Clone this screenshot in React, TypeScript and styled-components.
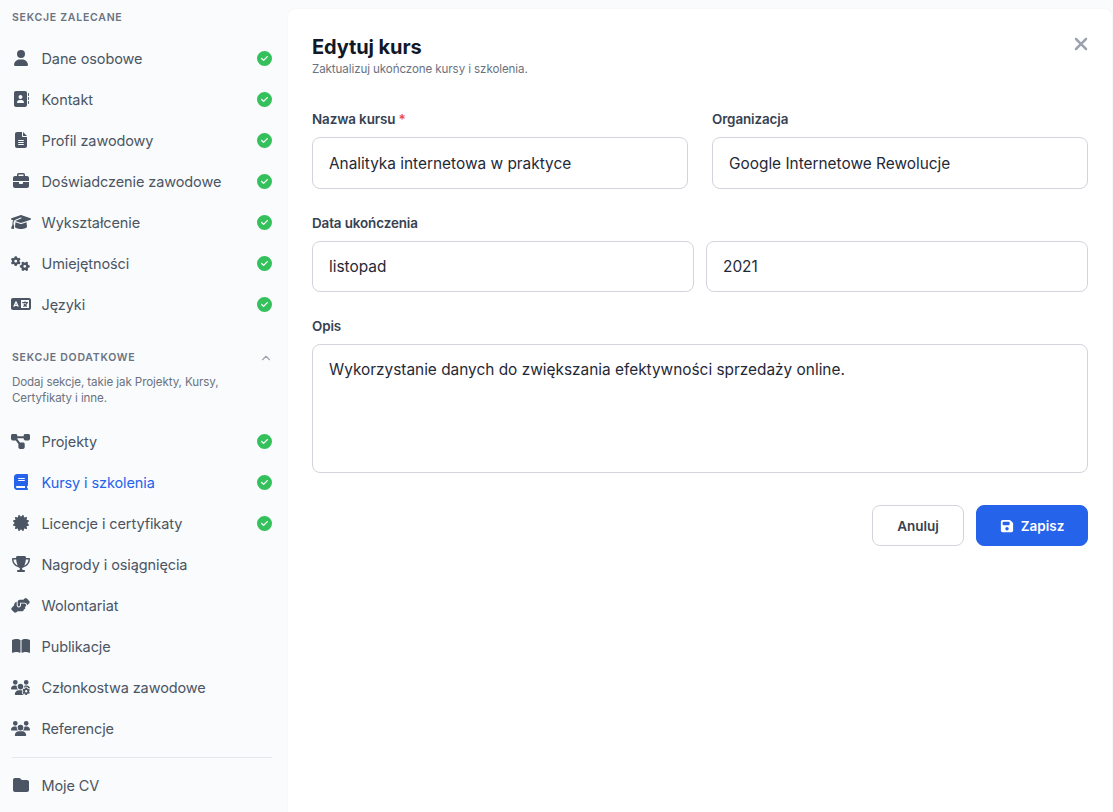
import React from 'react';
import styled, { createGlobalStyle } from 'styled-components';
import { IconType } from 'react-icons';
import {
  FaUser, FaAddressBook, FaFileLines, FaBriefcase, FaGraduationCap, FaGears, FaLanguage,
  FaDiagramProject, FaBook, FaCertificate, FaTrophy, FaHandshakeAngle, FaBookOpen,
  FaUsersGear, FaUsers, FaFolder, FaFloppyDisk, FaCircleCheck, FaXmark,
} from 'react-icons/fa6';
import { FiChevronUp } from 'react-icons/fi';

const Global = createGlobalStyle`
  html, body { margin: 0; padding: 0; background: #f9fbfd; }
  body { font-family: Inter, "Noto Sans", sans-serif; }
  * { box-sizing: border-box; }
`;

const Page = styled.div`
  display: flex;
  width: 1113px;
  height: 812px;
  overflow: hidden;
  background: #f9fbfd;
`;

const Sidebar = styled.aside`
  width: 288px;
  flex: none;
  padding: 10px 16px 0 12px;
  display: flex;
  flex-direction: column;
`;

const SectionHead = styled.div<{ $top?: number }>`
  display: flex;
  align-items: center;
  justify-content: space-between;
  height: 15px;
  margin-top: ${p => p.$top ?? 0}px;
  font-size: 10.5px;
  font-weight: 600;
  letter-spacing: 0.75px;
  color: #6b7280;
  text-transform: uppercase;
  svg { color: #9ca3af; margin-right: -1px; }
`;

const List = styled.div<{ $top: number }>`
  display: flex;
  flex-direction: column;
  gap: 13px;
  margin-top: ${p => p.$top}px;
`;

const Row = styled.div<{ $active?: boolean }>`
  display: flex;
  align-items: center;
  height: 28px;
  color: ${p => (p.$active ? '#2563eb' : '#4b5563')};
  font-size: 14.5px;
  letter-spacing: -0.1px;
`;

const IconSlot = styled.span<{ $size: number }>`
  width: 29.5px;
  flex: none;
  display: flex;
  justify-content: center;
  padding-right: 12.5px;
  font-size: ${p => p.$size}px;
  svg { display: block; flex: none; }
`;

const RowLabel = styled.span`
  flex: 1;
`;

const Check = styled(FaCircleCheck)`
  color: #34c15b;
  font-size: 15px;
`;

const Hint = styled.p`
  margin: 9px 0 0;
  max-width: 240px;
  font-size: 11.6px;
  line-height: 16px;
  color: #6b7280;
  letter-spacing: -0.1px;
`;

const Divider = styled.hr`
  border: 0;
  border-top: 1px solid #e5e7eb;
  margin: 15px 0 13px;
  width: 100%;
`;

const Panel = styled.main`
  flex: 1;
  margin: 9px 1px 0 0;
  background: #fff;
  border-radius: 8px 8px 0 0;
  box-shadow: 0 0 2px rgba(17, 24, 39, 0.06);
  padding: 24px 24px 0 24px;
  position: relative;
`;

const Title = styled.h1`
  margin: 0;
  font-size: 20px;
  line-height: 28px;
  font-weight: 700;
  color: #111827;
  letter-spacing: -0.1px;
`;

const Subtitle = styled.p`
  margin: 1px 0 0;
  font-size: 11.6px;
  line-height: 14px;
  color: #6b7280;
  letter-spacing: -0.1px;
`;

const Close = styled.button`
  position: absolute;
  top: 25px;
  right: 21px;
  padding: 0;
  border: 0;
  background: none;
  color: #9ca3af;
  font-size: 20px;
  display: flex;
`;

const Grid = styled.div<{ $cols: string; $gap: number; $top: number }>`
  display: grid;
  grid-template-columns: ${p => p.$cols};
  column-gap: ${p => p.$gap}px;
  margin-top: ${p => p.$top}px;
`;

const Label = styled.label<{ $top?: number }>`
  display: block;
  margin-top: ${p => p.$top ?? 0}px;
  margin-bottom: 9px;
  font-size: 13.4px;
  line-height: 18px;
  font-weight: 600;
  color: #374151;
  letter-spacing: -0.1px;
  em { font-style: normal; color: #ef4444; }
`;

const FieldBox = styled.div<{ $h?: number }>`
  height: ${p => p.$h ?? 52}px;
  border: 1px solid #d1d5db;
  border-radius: 8px;
  background: #fff;
  padding: 0 16px;
  display: flex;
  align-items: center;
  font-size: 15.4px;
  color: #1f2937;
`;

const TextBox = styled(FieldBox)`
  align-items: flex-start;
  padding-top: 14px;
  line-height: 21px;
`;

const Actions = styled.div`
  display: flex;
  justify-content: flex-end;
  gap: 12px;
  margin-top: 32px;
`;

const Button = styled.button<{ $primary?: boolean }>`
  height: 41px;
  border-radius: 8px;
  border: 1px solid ${p => (p.$primary ? '#2563eb' : '#d1d5db')};
  background: ${p => (p.$primary ? '#2563eb' : '#fff')};
  color: ${p => (p.$primary ? '#fff' : '#374151')};
  width: ${p => (p.$primary ? 112 : 92)}px;
  font: 600 13.5px Inter, sans-serif;
  display: flex;
  align-items: center;
  justify-content: center;
  gap: 7px;
  svg { font-size: 14px; }
`;

type Item = { icon: IconType; label: string; size?: number; done?: boolean; active?: boolean };

const recommended: Item[] = [
  { icon: FaUser, label: 'Dane osobowe', done: true },
  { icon: FaAddressBook, label: 'Kontakt', done: true },
  { icon: FaFileLines, label: 'Profil zawodowy', done: true },
  { icon: FaBriefcase, label: 'Doświadczenie zawodowe', done: true },
  { icon: FaGraduationCap, label: 'Wykształcenie', size: 20, done: true },
  { icon: FaGears, label: 'Umiejętności', size: 19, done: true },
  { icon: FaLanguage, label: 'Języki', size: 20, done: true },
];

const extra: Item[] = [
  { icon: FaDiagramProject, label: 'Projekty', size: 19, done: true },
  { icon: FaBook, label: 'Kursy i szkolenia', done: true, active: true },
  { icon: FaCertificate, label: 'Licencje i certyfikaty', done: true },
  { icon: FaTrophy, label: 'Nagrody i osiągnięcia', size: 18 },
  { icon: FaHandshakeAngle, label: 'Wolontariat', size: 19 },
  { icon: FaBookOpen, label: 'Publikacje', size: 18 },
  { icon: FaUsersGear, label: 'Członkostwa zawodowe', size: 19 },
  { icon: FaUsers, label: 'Referencje', size: 19 },
];

const NavRow = ({ icon: Icon, label, size = 16, done, active }: Item) => (
  <Row $active={active}>
    <IconSlot $size={size}><Icon /></IconSlot>
    <RowLabel>{label}</RowLabel>
    {done && <Check />}
  </Row>
);

export default function App() {
  return (
    <Page>
      <Global />
      <Sidebar>
        <SectionHead>Sekcje zalecane</SectionHead>
        <List $top={19}>
          {recommended.map(i => <NavRow key={i.label} {...i} />)}
        </List>
        <SectionHead $top={32}>
          Sekcje dodatkowe
          <FiChevronUp size={14} />
        </SectionHead>
        <Hint>Dodaj sekcje, takie jak Projekty, Kursy, Certyfikaty i inne.</Hint>
        <List $top={21}>
          {extra.map(i => <NavRow key={i.label} {...i} />)}
        </List>
        <Divider />
        <NavRow icon={FaFolder} label="Moje CV" />
      </Sidebar>
      <Panel>
        <Title>Edytuj kurs</Title>
        <Subtitle>Zaktualizuj ukończone kursy i szkolenia.</Subtitle>
        <Close aria-label="Zamknij"><FaXmark /></Close>
        <Grid $cols="376px 376px" $gap={24} $top={34}>
          <div>
            <Label>Nazwa kursu <em>*</em></Label>
            <FieldBox>Analityka internetowa w praktyce</FieldBox>
          </div>
          <div>
            <Label>Organizacja</Label>
            <FieldBox>Google Internetowe Rewolucje</FieldBox>
          </div>
        </Grid>
        <Label $top={25}>Data ukończenia</Label>
        <Grid $cols="382px 382px" $gap={12} $top={0}>
          <FieldBox $h={51}>listopad</FieldBox>
          <FieldBox $h={51}>2021</FieldBox>
        </Grid>
        <Label $top={25}>Opis</Label>
        <TextBox $h={129}>Wykorzystanie danych do zwiększania efektywności sprzedaży online.</TextBox>
        <Actions>
          <Button>Anuluj</Button>
          <Button $primary><FaFloppyDisk />Zapisz</Button>
        </Actions>
      </Panel>
    </Page>
  );
}
